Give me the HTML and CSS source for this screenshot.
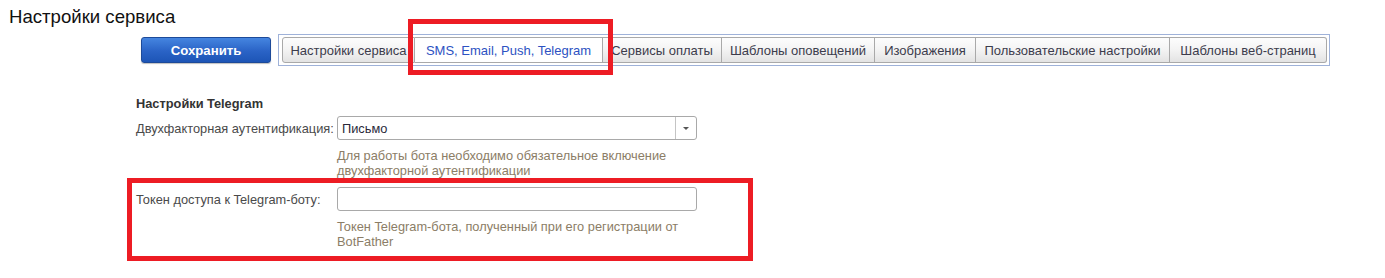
FILE: index.html
```html
<!DOCTYPE html>
<html lang="ru">
<head>
<meta charset="utf-8">
<title>Настройки сервиса</title>
<link rel="stylesheet" href="styles.css">
</head>
<body>
<div class="page">
  <h1 class="title">Настройки сервиса</h1>
  <div class="toolbar">
    <button class="btn-save">Сохранить</button>
    <div class="tabs">
      <div class="tab">Настройки сервиса</div>
      <div class="tab active">SMS, Email, Push, Telegram</div>
      <div class="tab">Сервисы оплаты</div>
      <div class="tab">Шаблоны оповещений</div>
      <div class="tab">Изображения</div>
      <div class="tab">Пользовательские настройки</div>
      <div class="tab">Шаблоны веб-страниц</div>
    </div>
  </div>
  <div class="form">
    <div class="section-title">Настройки Telegram</div>
    <div class="grid">
      <div class="label">Двухфакторная аутентификация:</div>
      <div class="select">
        <span class="select-value">Письмо</span>
        <span class="select-btn"><span class="caret"></span></span>
      </div>
      <div class="hint">Для работы бота необходимо обязательное включение двухфакторной аутентификации</div>
      <div class="label label-token">Токен доступа к Telegram-боту:</div>
      <div class="input"></div>
      <div class="hint">Токен Telegram-бота, полученный при его регистрации от BotFather</div>
    </div>
  </div>
  <div class="mark mark-tab"></div>
  <div class="mark mark-token"></div>
</div>
</body>
</html>
```
FILE: styles.css
```css
html, body {
  margin: 0;
  padding: 0;
  background: #ffffff;
}
body {
  font-family: Arial, "Liberation Sans", sans-serif;
  font-size: 13px;
  color: #333;
}
.page {
  position: relative;
  width: 1385px;
  height: 278px;
  overflow: hidden;
}
.title {
  margin: 0;
  padding: 6px 0 0 9px;
  font-size: 18.6px;
  font-weight: normal;
  line-height: 21px;
  color: #111;
}
.toolbar {
  display: flex;
  align-items: center;
  margin-top: 7px;
  padding-left: 141px;
  gap: 7px;
}
.btn-save {
  width: 130px;
  height: 26px;
  padding: 0;
  border: 1px solid #1d4a99;
  border-radius: 3px;
  background: linear-gradient(#4585e0, #2a63c6 55%, #1d55b6);
  color: #fff;
  font-family: Arial, "Liberation Sans", sans-serif;
  font-size: 13.2px;
  font-weight: bold;
  box-shadow: 0 1px 1px rgba(0,0,0,0.25);
}
.tabs {
  display: flex;
  width: 1052px;
  box-sizing: border-box;
  border: 1px solid #9fb2d9;
  padding: 2px 2px 2px 3px;
}
.tab {
  height: 26px;
  box-sizing: border-box;
  display: flex;
  align-items: center;
  justify-content: center;
  border: 1px solid #a9a9a9;
  border-left: none;
  background: linear-gradient(#fdfdfd, #f3f3f3 50%, #e3e3e3);
  color: #3c3c4c;
  white-space: nowrap;
}
.tab:first-child {
  border-left: 1px solid #a9a9a9;
  border-radius: 3px 0 0 3px;
}
.tab:last-child {
  border-radius: 0 3px 3px 0;
}
.tab:nth-child(1) { width: 133px; }
.tab:nth-child(2) { width: 188px; }
.tab:nth-child(3) { width: 119px; }
.tab:nth-child(4) { width: 153px; }
.tab:nth-child(5) { width: 101px; }
.tab:nth-child(6) { width: 194px; }
.tab:nth-child(7) { width: 157px; }
.tab.active {
  background: #fff;
  color: #2d52c2;
}
.form {
  padding-left: 136px;
  margin-top: 30px;
  font-size: 12.8px;
}
.section-title {
  font-weight: bold;
  line-height: 15px;
  color: #333;
}
.grid {
  display: grid;
  grid-template-columns: 201px 360px;
  align-items: center;
  margin-top: 5px;
}
.label {
  color: #4a4a4a;
  line-height: 15px;
  padding-top: 1px;
}
.label-token {
  margin-top: 9px;
}
.select, .input {
  box-sizing: border-box;
  height: 24px;
  border: 1px solid #a9a9a9;
  border-radius: 3px;
  background: #fff;
}
.select {
  display: flex;
  align-items: center;
}
.select-value {
  flex: 1;
  padding-left: 4px;
  color: #2a2a3a;
  font-weight: normal;
}
.select-btn {
  width: 20px;
  height: 100%;
  border-left: 1px solid #c4c4c4;
  display: flex;
  align-items: center;
  justify-content: center;
}
.caret {
  width: 0;
  height: 0;
  border-left: 3px solid transparent;
  border-right: 3px solid transparent;
  border-top: 3px solid #555;
}
.input {
  margin-top: 9px;
}
.hint {
  grid-column: 2;
  margin-top: 8px;
  line-height: 15px;
  color: #8b7d66;
}
.mark {
  position: absolute;
  box-sizing: border-box;
  border: 5px solid #ed1c24;
}
.mark-tab {
  left: 408px;
  top: 19px;
  width: 205px;
  height: 56px;
}
.mark-token {
  left: 127px;
  top: 178px;
  width: 626px;
  height: 83px;
}
```
